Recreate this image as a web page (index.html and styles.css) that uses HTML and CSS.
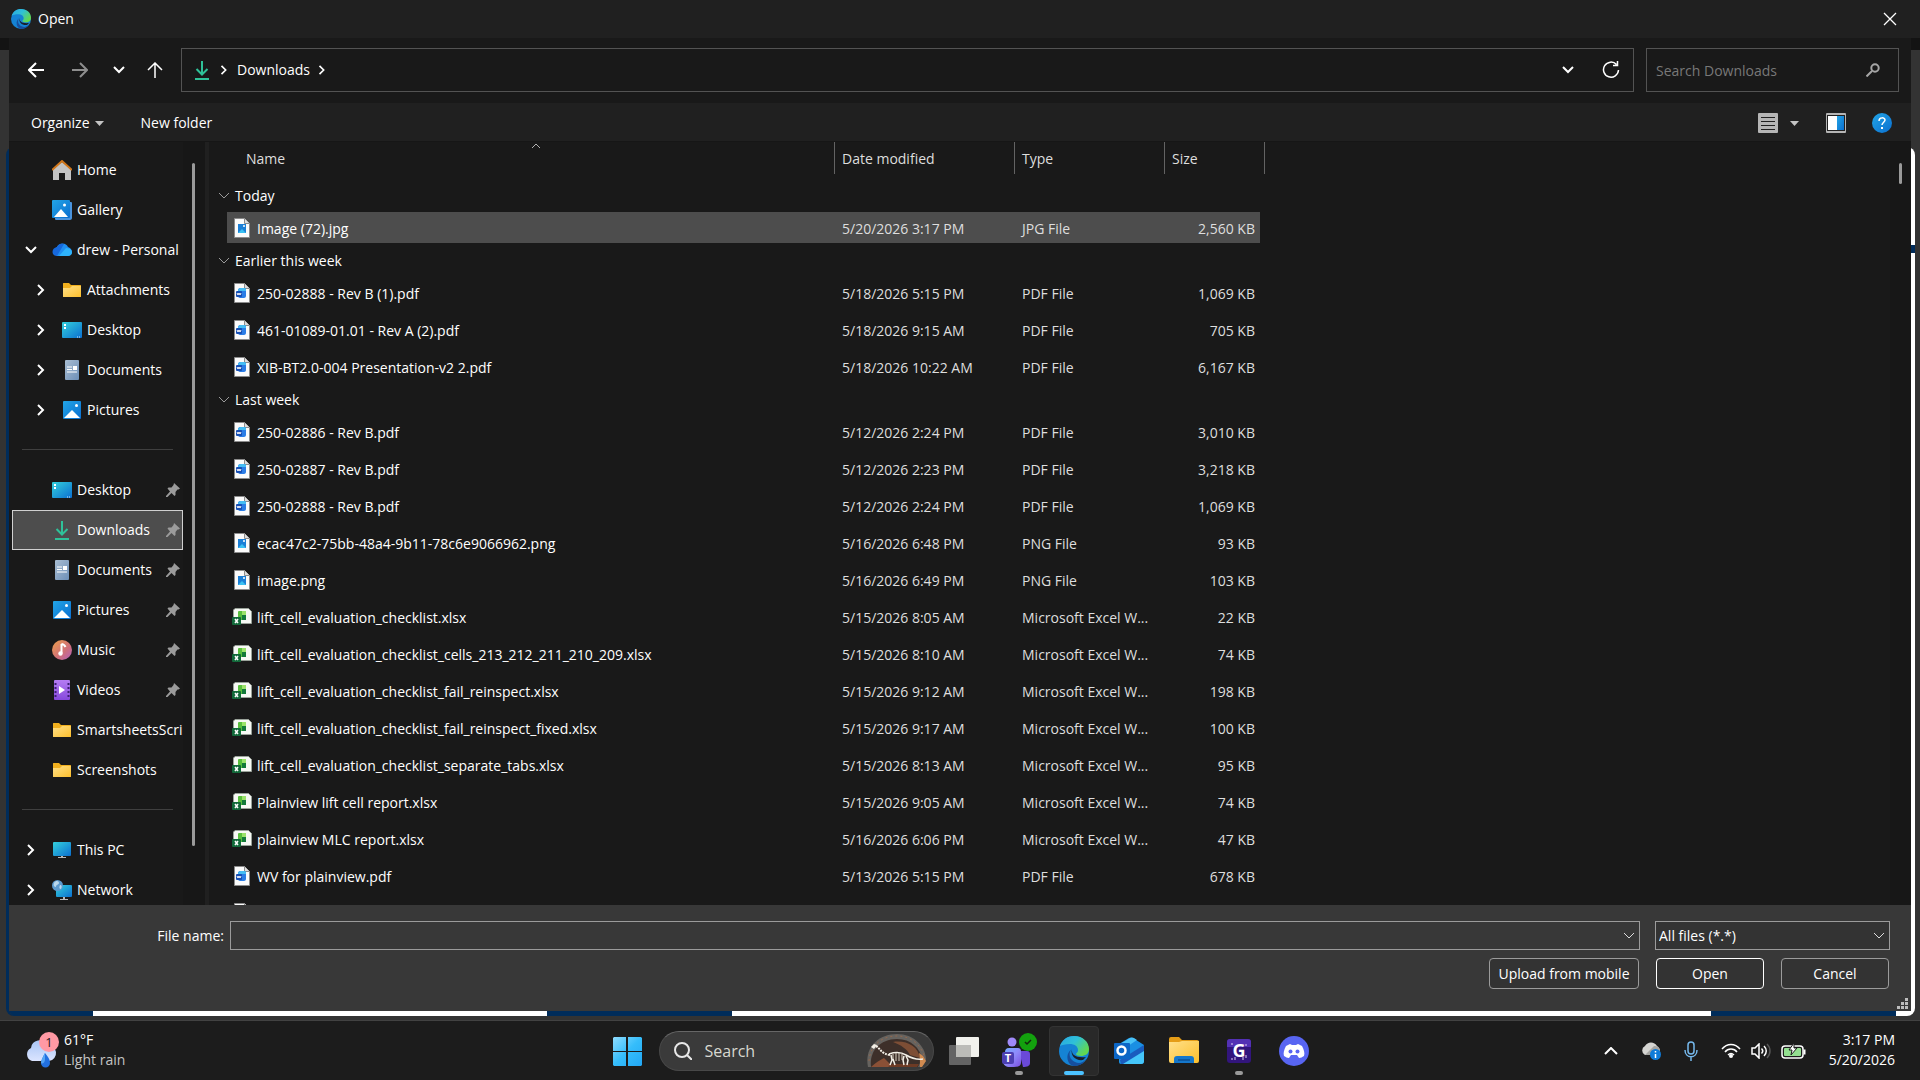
FILE: index.html
```html
<!DOCTYPE html>
<html lang="en">
<head>
    <meta charset="UTF-8">
    <meta name="viewport" content="width=device-width, initial-scale=1.0">
    <title>Open</title>
    <link rel="stylesheet" href="styles.css">
</head>
<body>
    <!-- Shared icons -->
    <svg class="sprite" aria-hidden="true">
        <defs>
            <linearGradient id="gEdgeTop" x1="0" y1="0" x2="1" y2="0.6">
                <stop offset="0" stop-color="#2aa6e0"/><stop offset="0.5" stop-color="#2fc0d8"/><stop offset="1" stop-color="#62d84e"/>
            </linearGradient>
            <linearGradient id="gBlue" x1="0" y1="0" x2="1" y2="1">
                <stop offset="0" stop-color="#22a5e6"/><stop offset="1" stop-color="#0b6fd0"/>
            </linearGradient>
            <linearGradient id="gScreen" x1="0" y1="0" x2="1" y2="1">
                <stop offset="0" stop-color="#34d0dc"/><stop offset="1" stop-color="#0b6fd0"/>
            </linearGradient>
            <linearGradient id="gFolder" x1="0" y1="0" x2="1" y2="1">
                <stop offset="0" stop-color="#ffe08a"/><stop offset="1" stop-color="#fcbf2c"/>
            </linearGradient>
            <linearGradient id="gDoc" x1="0" y1="0" x2="1" y2="1">
                <stop offset="0" stop-color="#a9bdd2"/><stop offset="1" stop-color="#6c8fb8"/>
            </linearGradient>
            <linearGradient id="gMusic" x1="0" y1="0" x2="1" y2="1">
                <stop offset="0" stop-color="#eda04a"/><stop offset="0.6" stop-color="#cf6f7a"/><stop offset="1" stop-color="#b05fc0"/>
            </linearGradient>
            <linearGradient id="gVideo" x1="0" y1="0" x2="0" y2="1">
                <stop offset="0" stop-color="#b57cf3"/><stop offset="1" stop-color="#8648dc"/>
            </linearGradient>
            <linearGradient id="gTeams" x1="0" y1="0" x2="1" y2="1">
                <stop offset="0" stop-color="#6fb0ff"/><stop offset="0.5" stop-color="#8f8bfa"/><stop offset="1" stop-color="#7a4fe0"/>
            </linearGradient>
            <linearGradient id="gWin" x1="0" y1="0" x2="1" y2="1">
                <stop offset="0" stop-color="#8fdcff"/><stop offset="0.5" stop-color="#35bdfb"/><stop offset="1" stop-color="#22a7f5"/>
            </linearGradient>
            <linearGradient id="gCloud" x1="0" y1="0" x2="0" y2="1">
                <stop offset="0" stop-color="#a9c6f5"/><stop offset="1" stop-color="#dbe4ff"/>
            </linearGradient>
        </defs>
        <symbol id="edge" viewBox="0 0 30 30">
            <circle cx="15" cy="15" r="15" fill="#1583d4"/>
            <path d="M1 10C3 4 8 0 15 0c9 0 15 6 15 13 0 5-4 7-8 7-3 0-5-1-5-2s2-1 2-4c0-4-4-6-8-6-5 0-8 1-10 2z" fill="url(#gEdgeTop)"/>
            <path d="M12 14c-3 4-1 10 4 12 4 2 8 1 11-3-3 6-8 7-12 7-7-1-9-12-3-16z" fill="#164f9e"/>
            <path d="M13 13c-1 6 4 9 14 8l-3 3c-7 1-13-4-11-11z" fill="#191f2b"/>
        </symbol>
        <symbol id="down" viewBox="0 0 20 20">
            <path d="M10 1v13M4.500 9l5.500 5.500L15.500 9" fill="none" stroke="#2fc299" stroke-width="2"/>
            <path d="M3 19h14" stroke="#2fc299" stroke-width="2"/>
        </symbol>
        <symbol id="home" viewBox="0 0 20 20">
            <path d="M1 9l9-7 9 7v11h-6v-7H7v7H1z" fill="#c4c4c4"/>
            <path d="M0 10l10-9 10 9" fill="none" stroke="#d0761a" stroke-width="2"/>
        </symbol>
        <symbol id="gallery" viewBox="0 0 20 20">
            <path d="M18 2h1c1 0 1 1 1 1v15c0 1-1 2-2 2H4c-1 0-1-1-1-2z" fill="#4a93dd"/>
            <rect width="18" height="18" rx="1" fill="url(#gBlue)"/>
            <circle cx="12.500" cy="5" r="1.500" fill="#fff"/>
            <path d="M2 17l7-8 7 8z" fill="#fff"/>
        </symbol>
        <symbol id="onedrive" viewBox="0 0 20 20">
            <path d="M5 16a5 5 0 0 1 0-9 6 6 0 0 1 11 0c3 1 4 3 4 5s-2 4-4 4z" fill="#1f8ef1"/>
            <path d="M5 7a6 6 0 0 1 7-3L5 16C-1 16-1 8 5 7z" fill="#1668dc"/>
            <path d="M7 16l7-8c5 0 6 3 6 4.500 0 2-2 3.500-4 3.500z" fill="#2eb3fb"/>
        </symbol>
        <symbol id="folder" viewBox="0 0 20 20">
            <path d="M1 4c0-1 0-1 1-1h5l2 2h9c1 0 1 0 1 1v5H1z" fill="#f2b01e"/>
            <path d="M1 8h7l2-2h9v10c0 1 0 1-1 1H2c-1 0-1 0-1-1z" fill="url(#gFolder)"/>
        </symbol>
        <symbol id="desktop" viewBox="0 0 20 20">
            <rect y="2" width="20" height="16" rx="1" fill="url(#gScreen)"/>
            <path d="M2 5h2M2 8h2" stroke="#fff" stroke-width="2"/>
            <path d="M15 17h1M17 17h1" stroke="#cfe6ff" stroke-width="1"/>
        </symbol>
        <symbol id="documents" viewBox="0 0 20 20">
            <rect x="3" width="14" height="20" rx="1" fill="url(#gDoc)"/>
            <path d="M5 7h5M5 9.500h5M5 12h10" stroke="#fff" stroke-width="1"/>
            <rect x="11" y="6" width="4" height="4" fill="#fff"/>
        </symbol>
        <symbol id="pictures" viewBox="0 0 20 20">
            <rect x="1" y="1" width="18" height="18" rx="1" fill="url(#gBlue)"/>
            <circle cx="14.500" cy="5.500" r="1.500" fill="#fff"/>
            <path d="M2 18l8-8 8 8z" fill="#fff"/>
        </symbol>
        <symbol id="music" viewBox="0 0 20 20">
            <circle cx="10" cy="10" r="10" fill="url(#gMusic)"/>
            <path d="M9.500 4v9M9.500 4c2 0 3 1 4 3" fill="none" stroke="#fff" stroke-width="2"/>
            <circle cx="8.500" cy="13.500" r="2.200" fill="#fff"/>
        </symbol>
        <symbol id="videos" viewBox="0 0 20 20">
            <rect x="2" width="16" height="20" rx="1" fill="url(#gVideo)"/>
            <path d="M3.500 3v15M16.500 3v15" stroke="#3c1d72" stroke-width="2" stroke-dasharray="2 2"/>
            <path d="M7 6l6 4-6 4z" fill="#fff"/>
        </symbol>
        <symbol id="pc" viewBox="0 0 20 20">
            <rect x="1" y="2" width="18" height="14" rx="1" fill="url(#gScreen)"/>
            <path d="M9 16h2v1h3v1H6v-1h3z" fill="#b8b8b8"/>
        </symbol>
        <symbol id="network" viewBox="0 0 20 20">
            <rect x="4" y="5" width="16" height="12" rx="1" fill="url(#gScreen)"/>
            <path d="M11 17h2v2h3v1H8v-1h3z" fill="#b8b8b8"/>
            <circle cx="5.500" cy="5.500" r="5.500" fill="#5d9bd0"/>
            <path d="M2 3c2-3 5-2 5 0s-3 1-3 4C2 7 1 5 2 3zM8 5c2 0 2 2 1 4-2 0-2-2-1-4z" fill="#b9d8ee"/>
        </symbol>
        <symbol id="pin" viewBox="0 0 14 14">
            <path d="M8 0l6 5.500-1.500 1-1 0L9.500 9v3l-1 1L5.500 10 1.500 14 0 14v-1l4-4.500L1.500 5.500l1-1h3L7.500 2z" fill="#9b9b9b"/>
        </symbol>
        <symbol id="right" viewBox="0 0 12 12">
            <path d="M3 1l5 5-5 5" fill="none" stroke="currentColor" stroke-width="2"/>
        </symbol>
        <symbol id="chevdown" viewBox="0 0 12 12">
            <path d="M1 3l5 5 5-5" fill="none" stroke="currentColor" stroke-width="2"/>
        </symbol>
        <symbol id="thindown" viewBox="0 0 12 12">
            <path d="M1 3l5 5 5-5" fill="none" stroke="currentColor" stroke-width="1"/>
        </symbol>
        <symbol id="caret" viewBox="0 0 10 10">
            <path d="M0 3h9L4.500 8z" fill="currentColor"/>
        </symbol>
        <symbol id="image" viewBox="0 0 20 20">
            <path d="M2.500.5h10l5 5v14h-15z" fill="#fbfbfb" stroke="#8c8c8c"/>
            <path d="M12.500.5v5h5" fill="#ddd" stroke="#8c8c8c"/>
            <rect x="6" y="6" width="8" height="9" fill="#1b7fd6"/>
            <path d="M6 15l4-4 4 4z" fill="#3ac0f2"/>
            <circle cx="12" cy="8" r="1" fill="#fff"/>
        </symbol>
        <symbol id="pdf" viewBox="0 0 20 20">
            <path d="M2.500.5h10l5 5v14h-15z" fill="#fbfbfb" stroke="#8c8c8c"/>
            <path d="M12.500.5v5h5" fill="#ddd" stroke="#8c8c8c"/>
            <path d="M8 5h4c2 0 2 1 2 2v6c0 1-1 2-2 2H8c-1 0-2-1-2-2V7c0-1 1-2 2-2z" fill="#2b7de6"/>
            <path d="M6 8c0-2 1-3 3-3h3c2 0 2 1 2 3z" fill="#46bdf3"/>
            <rect x="4" y="8" width="6" height="6" rx="1" fill="#174fb5"/>
            <path d="M5 10l1 2 1-2 1 2 1-2" fill="none" stroke="#fff" stroke-width="1"/>
        </symbol>
        <symbol id="excel" viewBox="0 0 20 20">
            <path d="M3 1.500h13.500l3 3V16.500H1.500V3z" fill="#f7f9f5" stroke="#9aa39a"/>
            <rect x="6" y="4" width="8" height="9" rx="1" fill="#58bf3d"/>
            <rect x="10" y="4" width="4" height="4" fill="#9be36b"/>
            <rect x="10" y="8" width="4" height="5" fill="#137a3a"/>
            <rect y="10" width="9" height="8" rx="1" fill="#12693a"/>
            <path d="M3 12l3 4M6 12l-3 4" stroke="#fff" stroke-width="1.500"/>
        </symbol>
    </svg>

    <header class="titlebar">
        <svg class="icon20"><use href="#edge"/></svg>
        <h1>Open</h1>
        <button class="close" aria-label="Close">
            <svg width="14" height="14" viewBox="0 0 14 14"><path d="M1 1l12 12M13 1L1 13" stroke="#fff" stroke-width="1.300"/></svg>
        </button>
    </header>

    <div class="backdrop">
        <!-- Browser page showing round the dialog -->
        <div class="page">
            <div class="page-side"></div>
            <div class="page-bottom"><i class="navy one"></i><i class="white two"></i><i class="navy three"></i><i class="white four"></i><i class="navy three"></i><i class="white five"></i></div>
        </div>

        <div class="dialog">
            <div class="nav">
                <div class="nav-buttons">
                    <button aria-label="Back"><svg width="16" height="16" viewBox="0 0 16 16"><path d="M16 8H1M8 1L1 8l7 7" fill="none" stroke="#fff" stroke-width="2"/></svg></button>
                    <button aria-label="Forward"><svg width="16" height="16" viewBox="0 0 16 16"><path d="M0 8h15M8 1l7 7-7 7" fill="none" stroke="#8e8e8e" stroke-width="2"/></svg></button>
                    <button class="recent" aria-label="Recent"><svg class="icon12"><use href="#chevdown"/></svg></button>
                    <button class="up" aria-label="Up"><svg width="16" height="16" viewBox="0 0 16 16"><path d="M8 16V1M1 8l7-7 7 7" fill="none" stroke="#fff" stroke-width="1.500"/></svg></button>
                </div>
                <div class="address">
                    <svg class="icon20"><use href="#down"/></svg>
                    <svg class="crumb"><use href="#right"/></svg>
                    <a href="#">Downloads</a>
                    <svg class="crumb"><use href="#right"/></svg>
                    <button class="history" aria-label="Previous locations"><svg class="icon12"><use href="#chevdown"/></svg></button>
                    <button aria-label="Refresh"><svg width="18" height="18" viewBox="0 0 18 18"><path d="M14.500 3.500A7.500 7.500 0 1 0 16.500 9M15.500 0v4.500H11" fill="none" stroke="#fff" stroke-width="1.500"/></svg></button>
                </div>
                <div class="search">
                    <input type="text" placeholder="Search Downloads" aria-label="Search Downloads">
                    <svg width="14" height="14" viewBox="0 0 14 14"><circle cx="9" cy="5" r="3.700" fill="none" stroke="#a6a6a6" stroke-width="2"/><path d="M6 8l-5.500 5.500" stroke="#a6a6a6" stroke-width="2"/></svg>
                </div>
            </div>

            <div class="commands">
                <button class="organize">Organize <svg class="icon10"><use href="#caret"/></svg></button>
                <button>New folder</button>
                <div class="views">
                    <button aria-label="Details view"><svg width="20" height="20" viewBox="0 0 20 20"><rect width="20" height="20" rx="1" fill="#b5b5b5"/><path d="M3 4.500h14M3 8.500h14M3 12.500h14M3 16.500h14" stroke="#202020"/></svg></button>
                    <button aria-label="More views"><svg class="icon10"><use href="#caret"/></svg></button>
                    <button class="pane" aria-label="Preview pane"><svg width="20" height="20" viewBox="0 0 20 20"><rect width="20" height="20" rx="1" fill="#b5b5b5"/><rect x="1" y="2" width="18" height="16" fill="#202020"/><rect x="2" y="3" width="9" height="14" fill="#fff"/><rect x="11" y="3" width="7" height="14" fill="url(#gBlue)"/></svg></button>
                    <button class="help" aria-label="Help"><svg width="20" height="20" viewBox="0 0 20 20"><circle cx="10" cy="10" r="10" fill="url(#gBlue)"/><path d="M7 8c0-4 6-4 6-1 0 2-3 2.500-3 5" fill="none" stroke="#fff" stroke-width="1.500"/><rect x="9" y="14" width="2" height="2" fill="#fff"/></svg></button>
                </div>
            </div>

            <div class="content">
                <nav class="tree">
                    <div class="items">
                        <a href="#"><i class="exp"></i><svg class="icon20"><use href="#home"/></svg><span>Home</span></a>
                        <a href="#"><i class="exp"></i><svg class="icon20"><use href="#gallery"/></svg><span>Gallery</span></a>
                        <a href="#"><svg class="exp"><use href="#chevdown"/></svg><svg class="icon20"><use href="#onedrive"/></svg><span>drew - Personal</span></a>
                        <a href="#" class="sub"><svg class="exp"><use href="#right"/></svg><svg class="icon20"><use href="#folder"/></svg><span>Attachments</span></a>
                        <a href="#" class="sub"><svg class="exp"><use href="#right"/></svg><svg class="icon20"><use href="#desktop"/></svg><span>Desktop</span></a>
                        <a href="#" class="sub"><svg class="exp"><use href="#right"/></svg><svg class="icon20"><use href="#documents"/></svg><span>Documents</span></a>
                        <a href="#" class="sub"><svg class="exp"><use href="#right"/></svg><svg class="icon20"><use href="#pictures"/></svg><span>Pictures</span></a>
                        <hr>
                        <a href="#"><i class="exp"></i><svg class="icon20"><use href="#desktop"/></svg><span>Desktop</span><svg class="pin"><use href="#pin"/></svg></a>
                        <a href="#" class="selected"><i class="exp"></i><svg class="icon20"><use href="#down"/></svg><span>Downloads</span><svg class="pin"><use href="#pin"/></svg></a>
                        <a href="#"><i class="exp"></i><svg class="icon20"><use href="#documents"/></svg><span>Documents</span><svg class="pin"><use href="#pin"/></svg></a>
                        <a href="#"><i class="exp"></i><svg class="icon20"><use href="#pictures"/></svg><span>Pictures</span><svg class="pin"><use href="#pin"/></svg></a>
                        <a href="#"><i class="exp"></i><svg class="icon20"><use href="#music"/></svg><span>Music</span><svg class="pin"><use href="#pin"/></svg></a>
                        <a href="#"><i class="exp"></i><svg class="icon20"><use href="#videos"/></svg><span>Videos</span><svg class="pin"><use href="#pin"/></svg></a>
                        <a href="#"><i class="exp"></i><svg class="icon20"><use href="#folder"/></svg><span>SmartsheetsScrip</span></a>
                        <a href="#"><i class="exp"></i><svg class="icon20"><use href="#folder"/></svg><span>Screenshots</span></a>
                        <hr>
                        <a href="#"><svg class="exp"><use href="#right"/></svg><svg class="icon20"><use href="#pc"/></svg><span>This PC</span></a>
                        <a href="#"><svg class="exp"><use href="#right"/></svg><svg class="icon20"><use href="#network"/></svg><span>Network</span></a>
                    </div>
                    <div class="scroll"><div class="thumb"></div></div>
                </nav>

                <div class="files">
                    <table>
                        <colgroup><col class="c-name"><col class="c-date"><col class="c-type"><col class="c-size"></colgroup>
                        <thead>
                            <tr>
                                <th><div>Name<svg class="sort" viewBox="0 0 10 6"><path d="M1 5l4-4 4 4" fill="none" stroke="#b0b0b0"/></svg></div></th>
                                <th><div>Date modified</div></th>
                                <th><div>Type</div></th>
                                <th><div>Size</div></th>
                            </tr>
                        </thead>
                        <tbody>
                            <tr class="group"><th colspan="4"><svg class="icon12"><use href="#thindown"/></svg>Today</th></tr>
                            <tr class="selected"><td><svg class="icon20"><use href="#image"/></svg>Image (72).jpg</td><td>5/20/2026 3:17 PM</td><td>JPG File</td><td>2,560 KB</td></tr>
                            <tr class="group"><th colspan="4"><svg class="icon12"><use href="#thindown"/></svg>Earlier this week</th></tr>
                            <tr><td><svg class="icon20"><use href="#pdf"/></svg>250-02888 - Rev B (1).pdf</td><td>5/18/2026 5:15 PM</td><td>PDF File</td><td>1,069 KB</td></tr>
                            <tr><td><svg class="icon20"><use href="#pdf"/></svg>461-01089-01.01 - Rev A (2).pdf</td><td>5/18/2026 9:15 AM</td><td>PDF File</td><td>705 KB</td></tr>
                            <tr><td><svg class="icon20"><use href="#pdf"/></svg>XIB-BT2.0-004 Presentation-v2 2.pdf</td><td>5/18/2026 10:22 AM</td><td>PDF File</td><td>6,167 KB</td></tr>
                            <tr class="group"><th colspan="4"><svg class="icon12"><use href="#thindown"/></svg>Last week</th></tr>
                            <tr><td><svg class="icon20"><use href="#pdf"/></svg>250-02886 - Rev B.pdf</td><td>5/12/2026 2:24 PM</td><td>PDF File</td><td>3,010 KB</td></tr>
                            <tr><td><svg class="icon20"><use href="#pdf"/></svg>250-02887 - Rev B.pdf</td><td>5/12/2026 2:23 PM</td><td>PDF File</td><td>3,218 KB</td></tr>
                            <tr><td><svg class="icon20"><use href="#pdf"/></svg>250-02888 - Rev B.pdf</td><td>5/12/2026 2:24 PM</td><td>PDF File</td><td>1,069 KB</td></tr>
                            <tr><td><svg class="icon20"><use href="#image"/></svg>ecac47c2-75bb-48a4-9b11-78c6e9066962.png</td><td>5/16/2026 6:48 PM</td><td>PNG File</td><td>93 KB</td></tr>
                            <tr><td><svg class="icon20"><use href="#image"/></svg>image.png</td><td>5/16/2026 6:49 PM</td><td>PNG File</td><td>103 KB</td></tr>
                            <tr><td><svg class="icon20"><use href="#excel"/></svg>lift_cell_evaluation_checklist.xlsx</td><td>5/15/2026 8:05 AM</td><td>Microsoft Excel W...</td><td>22 KB</td></tr>
                            <tr><td><svg class="icon20"><use href="#excel"/></svg>lift_cell_evaluation_checklist_cells_213_212_211_210_209.xlsx</td><td>5/15/2026 8:10 AM</td><td>Microsoft Excel W...</td><td>74 KB</td></tr>
                            <tr><td><svg class="icon20"><use href="#excel"/></svg>lift_cell_evaluation_checklist_fail_reinspect.xlsx</td><td>5/15/2026 9:12 AM</td><td>Microsoft Excel W...</td><td>198 KB</td></tr>
                            <tr><td><svg class="icon20"><use href="#excel"/></svg>lift_cell_evaluation_checklist_fail_reinspect_fixed.xlsx</td><td>5/15/2026 9:17 AM</td><td>Microsoft Excel W...</td><td>100 KB</td></tr>
                            <tr><td><svg class="icon20"><use href="#excel"/></svg>lift_cell_evaluation_checklist_separate_tabs.xlsx</td><td>5/15/2026 8:13 AM</td><td>Microsoft Excel W...</td><td>95 KB</td></tr>
                            <tr><td><svg class="icon20"><use href="#excel"/></svg>Plainview lift cell report.xlsx</td><td>5/15/2026 9:05 AM</td><td>Microsoft Excel W...</td><td>74 KB</td></tr>
                            <tr><td><svg class="icon20"><use href="#excel"/></svg>plainview MLC report.xlsx</td><td>5/16/2026 6:06 PM</td><td>Microsoft Excel W...</td><td>47 KB</td></tr>
                            <tr><td><svg class="icon20"><use href="#pdf"/></svg>WV for plainview.pdf</td><td>5/13/2026 5:15 PM</td><td>PDF File</td><td>678 KB</td></tr>
                            <tr><td><svg class="icon20"><use href="#pdf"/></svg></td><td></td><td></td><td></td></tr>
                        </tbody>
                    </table>
                    <div class="scroll"><div class="thumb"></div></div>
                </div>
            </div>

            <form class="bottom">
                <div class="row">
                    <label for="filename">File name:</label>
                    <div class="combo">
                        <input type="text" id="filename">
                        <svg class="icon12"><use href="#thindown"/></svg>
                    </div>
                    <div class="combo filter">
                        <select aria-label="File type"><option>All files (*.*)</option></select>
                        <svg class="icon12"><use href="#thindown"/></svg>
                    </div>
                </div>
                <div class="row actions">
                    <button type="button" class="upload">Upload from mobile</button>
                    <button type="button" class="primary">Open</button>
                    <button type="button">Cancel</button>
                </div>
                <svg class="grip" viewBox="0 0 11 11"><path d="M8 0h3v3H8zM4 4h3v3H4zM8 4h3v3H8zM0 8h3v3H0zM4 8h3v3H4zM8 8h3v3H8z" fill="#bdbdbd"/></svg>
            </form>
        </div>
    </div>

    <footer class="taskbar">
        <button class="weather">
            <svg width="36" height="38" viewBox="0 0 36 38">
                <path d="M7 30a7 7 0 0 1-1-13 8.500 8.500 0 0 1 16-3 8 8 0 0 1 2 16z" fill="url(#gCloud)"/>
                <path d="M20 22c4 5 5 7 5 10a4.500 4.500 0 0 1-9 0c0-3 2-6 4-10z" fill="#2270e0"/>
                <path d="M20 22c-2 4-4 7-4 10 1 1 3 1 4-3z" fill="#54a5f5"/>
                <circle cx="24" cy="11" r="10" fill="#ff99a4"/>
                <text x="24" y="16" class="badge">1</text>
            </svg>
            <span>61°F<br><em>Light rain</em></span>
        </button>

        <div class="apps">
            <button class="tile" aria-label="Start"><svg width="30" height="30" viewBox="0 0 30 30"><path d="M1 2l1-1h12v14H1zM16 1h13l1 1v13H16zM1 16h13v14H2l-1-1zM16 16h14v13l-1 1H16z" fill="url(#gWin)"/></svg></button>
            <button class="pill">
                <svg width="18" height="18" viewBox="0 0 18 18"><circle cx="8" cy="8" r="7" fill="none" stroke="#e8e8e8" stroke-width="2"/><path d="M13 13l5 5" stroke="#e8e8e8" stroke-width="2"/></svg>
                <span>Search</span>
                <svg width="60" height="33" viewBox="0 0 60 33">
                    <path d="M2 33C-2 14 12 0 31 0c17 0 28 12 29 25-1 5-4 8-7 8z" fill="#66635f"/>
                    <path d="M3 27C4 12 15 2 31 2c14 0 24 9 27 20" fill="none" stroke="#94684e" stroke-width="1" stroke-dasharray="2 3"/>
                    <path d="M5 33C3 17 14 5 31 5c14 0 23 9 25 20l-4 8z" fill="#3d2f29"/>
                    <path d="M27 8c13-2 25 4 27 16l-10-3c-3-6-9-10-17-13z" fill="#7d4e35"/>
                    <path d="M54 33c0-6 0-9-1-14l4 3 3 5-4 6z" fill="#d08a50"/>
                    <path d="M5 33c4-4 9-7 13-9l9 9z" fill="#8a5036"/>
                    <path d="M22 33l4-3h27l-2 3z" fill="#6d3b25"/>
                    <path d="M5 13l3-3 3 1-3 4z" fill="#f3efe6"/>
                    <path d="M10 12c4 2 5 8 14 9" fill="none" stroke="#f3efe6" stroke-width="2" stroke-dasharray="2 1"/>
                    <path d="M23 20c6-2 12-2 17 1 5 3 11 5 17 4" fill="none" stroke="#f3efe6" stroke-width="1.500"/>
                    <path d="M27 20v6M30 19v8M33 19v8M36 20v6" stroke="#d9d0c0" stroke-width="1"/>
                    <path d="M25 21l1 5-2 5M27 25l2 6M38 22l-1 4 1 5M40 22l2 4-1 5" fill="none" stroke="#f3efe6" stroke-width="1.500"/>
                </svg>
            </button>
            <button class="tile" aria-label="Task view"><svg width="30" height="28" viewBox="0 0 30 28"><rect x="7" width="23" height="20" rx="1" fill="#f1f1ec"/><rect y="8" width="22" height="20" rx="1" fill="#777" fill-opacity="0.800"/><rect x="7" y="8" width="15" height="12" fill="#bcbcb8"/></svg></button>
            <button class="tile running" aria-label="Teams"><svg width="36" height="36" viewBox="0 0 36 36">
                <circle cx="11" cy="9" r="4.500" fill="#a08af8"/>
                <path d="M18 18h8c2 0 3 1 3 3v9c0 3-3 4-7 4z" fill="#6a49d8"/>
                <path d="M4 19c0-2 1-4 4-4h9c2 0 3 1 3 4v11c0 3-3 4-7 4H9c-4 0-7-2-7-6z" fill="url(#gTeams)"/>
                <rect x="1" y="19" width="12" height="12" rx="2" fill="#4c3fb1"/>
                <text x="7" y="29" class="letter small">T</text>
                <circle cx="27" cy="9" r="9" fill="#13a10e"/>
                <path d="M24 9l2 2 4-4" fill="none" stroke="#15250f" stroke-width="1.500"/>
            </svg></button>
            <button class="tile active" aria-label="Edge"><svg width="30" height="30"><use href="#edge"/></svg></button>
            <button class="tile" aria-label="Outlook"><svg width="30" height="28" viewBox="0 0 30 28">
                <path d="M5 7l10-6q2-1 4 0l11 7v16q0 3-3 3H7q-2 0-2-2z" fill="#1a8fe3"/>
                <path d="M6 7l10-6q2-1 4 0l3 2-9 6z" fill="#48c1f7"/>
                <path d="M30 8v9L14 27H7l-1-4z" fill="#1a5cbe"/>
                <path d="M30 14v10q0 3-3 3H9z" fill="#45c6fa"/>
                <rect y="6" width="16" height="16" rx="1" fill="#0c66c6"/>
                <circle cx="7.500" cy="13.500" r="4" fill="none" stroke="#fff" stroke-width="2.500"/>
            </svg></button>
            <button class="tile" aria-label="File Explorer"><svg width="30" height="27" viewBox="0 0 30 27">
                <path d="M0 2q0-2 2-2h8l3 3h15q2 0 2 2v4H0z" fill="#e59d17"/>
                <path d="M0 5h10l3-1h17v20q0 2-2 2H2q-2 0-2-2z" fill="url(#gFolder)"/>
                <path d="M5 26v-4q0-3 3-3h14q3 0 3 3v4z" fill="#1577cb"/>
                <path d="M9 23h12" stroke="#0b4f94" stroke-width="1.500"/>
            </svg></button>
            <button class="tile running" aria-label="G"><svg width="24" height="24" viewBox="0 0 24 24">
                <rect width="24" height="24" rx="3" fill="#32157c"/><path d="M3 0h18q3 0 3 3v5H0V3q0-3 3-3z" fill="#5331b4"/>
                <text x="12" y="18" class="letter">G</text>
                <path d="M5 19v2M8 18v3M16 18v3M19 16v3M5 4v2M19 5v2" stroke="#ddd0f4" stroke-width="1"/>
            </svg></button>
            <button class="tile" aria-label="Discord"><svg width="30" height="30" viewBox="0 0 30 30">
                <circle cx="15" cy="15" r="15" fill="#5865f2"/>
                <path d="M11 8l2 1h4l2-1 4 2c2 4 3 7 2 10-2 1-3 2-5 2l-2-3h-6l-2 3c-2 0-3-1-5-2-1-3 0-6 2-10z" fill="#fff"/>
                <circle cx="11.500" cy="15.500" r="2" fill="#5865f2"/><circle cx="18.500" cy="15.500" r="2" fill="#5865f2"/>
            </svg></button>
        </div>

        <div class="tray">
            <button aria-label="Hidden icons"><svg width="14" height="8" viewBox="0 0 14 8"><path d="M1 7l6-6 6 6" fill="none" stroke="#fff" stroke-width="2"/></svg></button>
            <button class="cloud" aria-label="OneDrive"><svg width="20" height="18" viewBox="0 0 20 18">
                <path d="M4 13a5 5 0 0 1 0-9 7 7 0 0 1 12 0c2 1 3 3 3 5l-6 4z" fill="#d5d5d2"/><path d="M4 13L13 4c3 0 6 2 6 5l-6 4z" fill="#a5a5a2"/>
                <circle cx="14.500" cy="12.500" r="5.500" fill="#0f7bd8"/><path d="M14.500 9v1.500M14.500 12v4" stroke="#fff" stroke-width="1.500"/>
            </svg></button>
            <button class="mic" aria-label="Microphone"><svg width="14" height="20" viewBox="0 0 14 20"><rect x="4" y="1" width="6" height="12" rx="3" fill="none" stroke="#76b9ed" stroke-width="1.500"/><path d="M1 9c0 9 12 9 12 0M7 16v4" fill="none" stroke="#76b9ed" stroke-width="1.500"/></svg></button>
            <button class="status" aria-label="Network, sound and battery">
                <svg width="20" height="16" viewBox="0 0 20 16"><path d="M1 6c5-6 13-6 18 0M4 9c3-4 9-4 12 0M7 12c2-2 4-2 6 0" fill="none" stroke="#fff" stroke-width="1.500"/><circle cx="10" cy="13" r="2" fill="#fff"/></svg>
                <svg width="20" height="16" viewBox="0 0 20 16"><path d="M1 5h3l4-4v14l-4-4H1z" fill="none" stroke="#fff" stroke-width="1.500"/><path d="M10.500 5.500c1.500 1.500 1.500 3.500 0 5M13 3c3 3 3 7 0 10" fill="none" stroke="#fff" stroke-width="1.500"/><path d="M16 1c4 4 4 10 0 14" fill="none" stroke="#555" stroke-width="1.500"/></svg>
                <svg width="25" height="16" viewBox="0 0 25 16"><rect x="1" y="3" width="21" height="12" rx="3" fill="none" stroke="#fff" stroke-width="1.500"/><rect x="3" y="5" width="17" height="8" rx="1" fill="#93e090"/><path d="M23.500 6.500v5" stroke="#fff" stroke-width="2"/><path d="M13 0L8 7h3l-1 5 6-7h-3z" fill="#fff" stroke="#1c1c1c"/></svg>
            </button>
            <time>3:17 PM<br>5/20/2026</time>
        </div>
    </footer>
</body>
</html>
```

FILE: styles.css
```css
* {
    margin: 0;
    padding: 0;
    box-sizing: border-box;
}

body {
    font-family: 'Open Sans', 'Noto Sans', sans-serif;
    font-size: 14px;
    line-height: 20px;
    color: #fff;
    background-color: #333;
    height: 100vh;
    display: flex;
    flex-direction: column;
    overflow: hidden;
}

button {
    background: none;
    border: none;
    color: inherit;
    font: inherit;
    display: flex;
    align-items: center;
    justify-content: center;
}

input, select {
    background: none;
    border: none;
    color: inherit;
    font: inherit;
}

a {
    color: inherit;
    text-decoration: none;
}

svg {
    display: block;
    flex: none;
}

.sprite {
    position: absolute;
    width: 0;
    height: 0;
}

.icon20 {
    width: 20px;
    height: 20px;
}

.icon12 {
    width: 12px;
    height: 12px;
}

.icon10 {
    width: 10px;
    height: 10px;
}

/* Title bar */
.titlebar {
    height: 38px;
    background-color: #202020;
    display: flex;
    align-items: center;
    gap: 7px;
    padding: 0 23px 0 11px;
}

.titlebar h1 {
    font-size: 14px;
    font-weight: normal;
}

.close {
    margin-left: auto;
}

/* Dialog over the browser window */
.backdrop {
    flex: 1;
    min-height: 0;
    display: grid;
    background: linear-gradient(#131313 12px, #333 12px);
}

.page, .dialog {
    grid-area: 1 / 1;
    min-height: 0;
    min-width: 0;
}

.page {
    margin: 109px 5px 4px 6px;
    border-radius: 8px;
    border-left: 3px solid #002c5a;
    overflow: hidden;
    display: flex;
    flex-direction: column;
}

.page-side {
    flex: 1;
    background: linear-gradient(#fff 98px, #002c5a 98px, #002c5a 106px, #fff 106px);
}

.page-bottom {
    height: 5px;
    display: flex;
}

.navy {
    background-color: #002c5a;
}

.white {
    background-color: #fff;
}

.one {
    width: 84px;
}

.two {
    width: 454px;
}

.three {
    width: 185px;
}

.four {
    flex: 1;
}

.five {
    width: 19px;
}

.dialog {
    margin: 0 9px;
    margin-bottom: 9px;
    display: flex;
    flex-direction: column;
    background-color: #191919;
}

/* Navigation row */
.nav {
    display: flex;
    gap: 7px;
    padding: 10px 12px 11px 5px;
}

.nav-buttons {
    display: flex;
}

.nav-buttons button {
    width: 44px;
}

.nav-buttons .recent {
    width: 34px;
}

.nav-buttons .up {
    width: 38px;
}

.address, .search {
    height: 44px;
    border: 1px solid #535353;
    display: flex;
    align-items: center;
}

.address {
    flex: 1;
    padding: 0 13px 0 10px;
}

.crumb {
    width: 10px;
    height: 10px;
    margin: 0 8px 0 7px;
}

.history {
    margin-left: auto;
    margin-right: 28px;
}

.search {
    width: 253px;
    margin-left: 5px;
    padding: 0 18px 0 9px;
}

.search input {
    flex: 1;
    min-width: 0;
    padding-top: 2px;
}

.search input::placeholder {
    color: #787878;
}

/* Command bar */
.commands {
    height: 38px;
    background-color: #202020;
    display: flex;
    align-items: center;
    gap: 36px;
    padding: 1px 19px 0 22px;
}

.organize {
    gap: 5px;
}

.commands .icon10 {
    color: #c4c4c4;
}

.views {
    margin-left: auto;
    display: flex;
    align-items: center;
    gap: 12px;
}

.pane {
    margin-left: 14px;
}

.help {
    margin-left: 14px;
}

/* Folder tree */
.content {
    flex: 1;
    min-height: 0;
    display: flex;
    border-top: 1px solid #161616;
}

.tree {
    width: 200px;
    display: flex;
    border-right: 4px solid #202020;
}

.items {
    width: 174px;
    padding: 8px 0 0 3px;
    overflow: hidden;
}

.items a {
    height: 40px;
    display: flex;
    align-items: center;
    padding-left: 12px;
    border: 1px solid transparent;
    white-space: nowrap;
}

.items .sub {
    padding-left: 22px;
}

.items span {
    margin-left: 5px;
}

.items .selected {
    background-color: #4d4d4d;
    border-color: #d0d0d0;
}

.exp {
    width: 12px;
    height: 12px;
    margin-right: 15px;
    flex: none;
}

.pin {
    width: 14px;
    height: 14px;
    margin-left: auto;
    margin-right: 2px;
}

.items hr {
    height: 1px;
    border: none;
    background-color: #3f3f3f;
    margin: 19px 10px 20px;
}

.scroll {
    background-color: #171717;
    padding-top: 21px;
}

.tree .scroll {
    flex: 1;
    padding-left: 9px;
}

.thumb {
    width: 3px;
    border-radius: 2px;
    background-color: #9a9a9a;
}

.tree .thumb {
    height: 683px;
}

/* File list */
.files {
    flex: 1;
    min-width: 0;
    display: flex;
    justify-content: space-between;
    align-items: flex-start;
    padding-left: 9px;
    overflow: hidden;
}

.files .scroll {
    width: 21px;
    height: 100%;
    padding-left: 9px;
}

.files .thumb {
    height: 21px;
}

table {
    table-layout: fixed;
    width: 1047px;
    border-collapse: separate;
    border-spacing: 0;
}

.c-name {
    width: 617px;
}

.c-date {
    width: 180px;
}

.c-type {
    width: 150px;
}

.c-size {
    width: 100px;
}

th {
    font-weight: normal;
    text-align: left;
}

thead th {
    height: 39px;
    vertical-align: top;
    color: #dedede;
}

thead th div {
    height: 32px;
    padding-left: 7px;
    line-height: 34px;
    border-right: 1px solid #636363;
    display: flex;
}

thead th:first-child div {
    padding-left: 28px;
}

.sort {
    width: 10px;
    height: 6px;
    margin: 1px auto 0 246px;
}

.group th {
    height: 28px;
    padding-top: 2px;
}

.group .icon12 {
    display: inline-block;
    vertical-align: -1px;
    margin-right: 5px;
    color: #9a9a9a;
}

td {
    height: 37px;
    padding-top: 2px;
    padding-left: 7px;
    color: #dedede;
    white-space: nowrap;
    border: 0 solid transparent;
    border-width: 3px 0;
    background-clip: padding-box;
}

td:first-child {
    color: #fff;
    padding-left: 5px;
    border-left-width: 9px;
}

td:last-child {
    text-align: right;
    padding-right: 5px;
    border-right-width: 5px;
}

td .icon20 {
    display: inline-block;
    vertical-align: -4px;
    margin-right: 5px;
}

tr.selected td {
    background-color: #4d4d4d;
}

/* File name and buttons */
.bottom {
    position: relative;
    height: 106px;
    padding: 16px 21px 0 0;
    background-color: #383838;
}

.row {
    display: flex;
    align-items: center;
}

.row label {
    width: 221px;
    padding-right: 6px;
    text-align: right;
}

.combo {
    flex: 1;
    height: 29px;
    display: flex;
    align-items: center;
    padding-right: 4px;
    border: 1px solid #9b9b9b;
    color: #ddd;
}

.combo input, .combo select {
    flex: 1;
    height: 100%;
    padding-left: 3px;
    color: #fff;
    appearance: none;
}

.filter {
    flex: none;
    width: 235px;
    margin-left: 15px;
    background-color: #333;
}

.actions {
    justify-content: flex-end;
    gap: 17px;
    margin-top: 8px;
    padding-right: 1px;
}

.actions button {
    width: 108px;
    height: 31px;
    border: 1px solid #9b9b9b;
    border-radius: 4px;
    background-color: #333;
}

.actions .upload {
    width: 150px;
}

.actions .primary {
    border-color: #fff;
}

.grip {
    position: absolute;
    right: 3px;
    bottom: 2px;
    width: 11px;
    height: 11px;
}

/* Taskbar */
.taskbar {
    height: 60px;
    border-top: 1px solid #424242;
    background-color: #1c1c1c;
    display: grid;
    grid-template-columns: 1fr auto 1fr;
    align-items: center;
    padding: 0 25px;
}

.weather {
    justify-self: start;
    gap: 3px;
    padding-bottom: 2px;
    text-align: left;
}

.weather em {
    font-style: normal;
    color: #c4c4c4;
}

.badge {
    font-size: 13px;
    text-anchor: middle;
    fill: #2b1517;
}

.letter {
    font-size: 18px;
    font-weight: bold;
    text-anchor: middle;
    fill: #fff;
}

.small {
    font-size: 11px;
}

.apps {
    display: flex;
    align-items: center;
    gap: 5px;
}

.tile {
    position: relative;
    width: 50px;
    height: 50px;
    border-radius: 4px;
}

.active {
    background-color: #292929;
    border: 1px solid #333;
}

.running::after, .active::after {
    content: '';
    position: absolute;
    bottom: 1px;
    width: 8px;
    height: 4px;
    border-radius: 2px;
    background-color: #9a9a9a;
}

.active::after {
    bottom: 0;
    width: 20px;
    background-color: #4cc2ff;
}

.pill {
    width: 275px;
    height: 40px;
    margin-left: 2px;
    padding: 0 7px 0 14px;
    border: 1px solid #484848;
    border-top-color: #666;
    border-radius: 20px;
    background-color: #3a3a3a;
    gap: 13px;
    font-size: 16px;
    color: #d8d8d0;
}

.pill span {
    flex: 1;
    text-align: left;
}

.tray {
    justify-self: end;
    display: flex;
    align-items: center;
}

.cloud {
    margin-left: 23px;
}

.mic {
    margin-left: 23px;
}

.status {
    gap: 10px;
    margin-left: 23px;
}

.tray time {
    width: 68px;
    margin-left: 21px;
    padding-bottom: 2px;
    text-align: right;
}
```
